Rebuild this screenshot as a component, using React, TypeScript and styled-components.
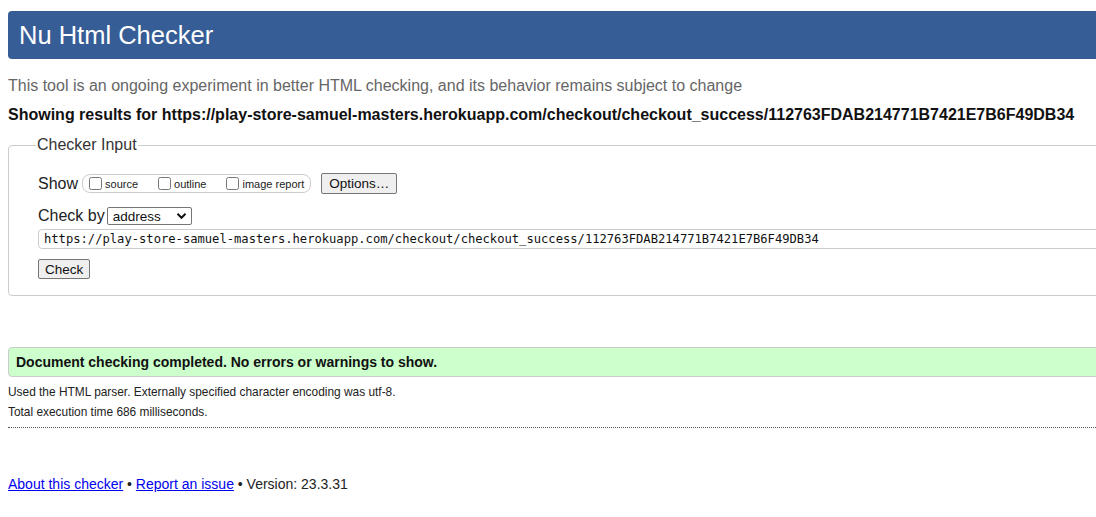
import React from "react";
import styled, { createGlobalStyle } from "styled-components";

const Global = createGlobalStyle`
  html, body { margin: 0; padding: 0; overflow: hidden; background: #fff; }
  body { font-family: "Liberation Sans", Arial, sans-serif; color: #222; }
`;

const Page = styled.div`
  width: 1140px;
  padding: 11px 0 0 8px;
`;

const Header = styled.h1`
  margin: 0;
  height: 48px;
  display: flex;
  align-items: center;
  padding-left: 11px;
  background: #365d95;
  color: #fff;
  font-size: 25.5px;
  font-weight: normal;
  border-radius: 4px;
`;

const Intro = styled.p`
  margin: 17px 0 0;
  font-size: 16px;
  line-height: 19px;
  color: #666;
`;

const Results = styled.p`
  margin: 10px 0 0;
  font-size: 16px;
  line-height: 19px;
  font-weight: bold;
  color: #111;
`;

const Fieldset = styled.fieldset`
  margin: 12px 0 0;
  padding: 19px 29px 16px;
  border: 1px solid #ccc;
  border-radius: 4px;
  display: flex;
  flex-direction: column;
  align-items: flex-start;
`;

const Legend = styled.legend`
  margin-left: -2px;
  padding: 0 1px;
  font-size: 16px;
  color: #333;
`;

const Row = styled.div`
  display: flex;
  align-items: center;
  font-size: 16px;
  color: #222;
  margin-top: ${(p: { top?: number }) => p.top ?? 0}px;
`;

const OptionGroup = styled.div`
  display: flex;
  align-items: center;
  gap: 20px;
  height: 17px;
  margin-left: 4px;
  padding: 0 6px 0 6px;
  border: 1px solid #ccc;
  border-radius: 8px;
`;

const CheckLabel = styled.label`
  display: flex;
  align-items: center;
  font-size: 11px;
  color: #222;
  input {
    margin: 0 3px 0 0;
    width: 13px;
    height: 13px;
  }
`;

const Button = styled.button`
  font-family: "Liberation Sans", Arial, sans-serif;
  font-size: 13.5px;
  height: ${(p: { h?: number; top?: number }) => p.h ?? 20}px;
  margin-top: ${(p: { h?: number; top?: number }) => p.top ?? 0}px;
  padding: 0 6px;
  background: #efefef;
  border: 1px solid #767676;
  border-radius: 2px;
  color: #111;
`;

const OptionsButton = styled(Button)`
  margin-left: 10px;
  padding: 0 7px;
`;

const Select = styled.div`
  margin-left: 2px;
  width: 85px;
  height: 18px;
  box-sizing: border-box;
  border: 1px solid #767676;
  border-radius: 2px;
  display: flex;
  align-items: center;
  justify-content: space-between;
  padding: 0 4px 0 5px;
  font-size: 13.5px;
  color: #111;
`;

const UrlInput = styled.div`
  margin-top: 4px;
  align-self: stretch;
  margin-right: -29px;
  height: 20px;
  box-sizing: border-box;
  border: 1px solid #ccc;
  border-radius: 4px;
  display: flex;
  align-items: center;
  padding-left: 5px;
  font-family: "DejaVu Sans Mono", "Liberation Mono", monospace;
  font-size: 12.15px;
  color: #111;
  white-space: nowrap;
  overflow: hidden;
`;

const Success = styled.div`
  margin-top: 51px;
  height: 30px;
  box-sizing: border-box;
  background: #ccffcc;
  border: 1px solid #ccc;
  border-radius: 4px;
  display: flex;
  align-items: center;
  padding-left: 7px;
  font-size: 14px;
  font-weight: bold;
  color: #111;
`;

const Details = styled.p`
  margin: ${(p: { top?: number }) => p.top ?? 6}px 0 0;
  font-size: 11.9px;
  line-height: 14px;
  color: #222;
`;

const Dotted = styled.hr`
  margin: 8px 0 0;
  border: 0;
  border-top: 1px dotted #555;
  height: 0;
`;

const Footer = styled.p`
  margin: 48px 0 0;
  font-size: 14px;
  line-height: 17px;
  color: #222;
  a { color: #0000ee; text-decoration: underline; }
`;

const Chevron = () => (
  <svg width="11" height="8" viewBox="0 0 11 8">
    <path d="M1.5 1.8 L5.5 5.8 L9.5 1.8" fill="none" stroke="#111" strokeWidth="2" />
  </svg>
);

export default function App() {
  return (
    <>
      <Global />
      <Page>
        <Header>Nu Html Checker</Header>
        <Intro>This tool is an ongoing experiment in better HTML checking, and its behavior remains subject to change</Intro>
        <Results>Showing results for https://play-store-samuel-masters.herokuapp.com/checkout/checkout_success/112763FDAB214771B7421E7B6F49DB34</Results>
        <Fieldset>
          <Legend>Checker Input</Legend>
          <Row>
            Show
            <OptionGroup>
              <CheckLabel><input type="checkbox" />source</CheckLabel>
              <CheckLabel><input type="checkbox" />outline</CheckLabel>
              <CheckLabel><input type="checkbox" />image report</CheckLabel>
            </OptionGroup>
            <OptionsButton h={21}>Options…</OptionsButton>
          </Row>
          <Row top={13}>
            Check by
            <Select>address<Chevron /></Select>
          </Row>
          <UrlInput>https://play-store-samuel-masters.herokuapp.com/checkout/checkout_success/112763FDAB214771B7421E7B6F49DB34</UrlInput>
          <Button top={10}>Check</Button>
        </Fieldset>
        <Success>Document checking completed. No errors or warnings to show.</Success>
        <Details top={8}>Used the HTML parser. Externally specified character encoding was utf-8.</Details>
        <Details top={6}>Total execution time 686 milliseconds.</Details>
        <Dotted />
        <Footer>
          <a href="#">About this checker</a> • <a href="#">Report an issue</a> • Version: 23.3.31
        </Footer>
      </Page>
    </>
  );
}
